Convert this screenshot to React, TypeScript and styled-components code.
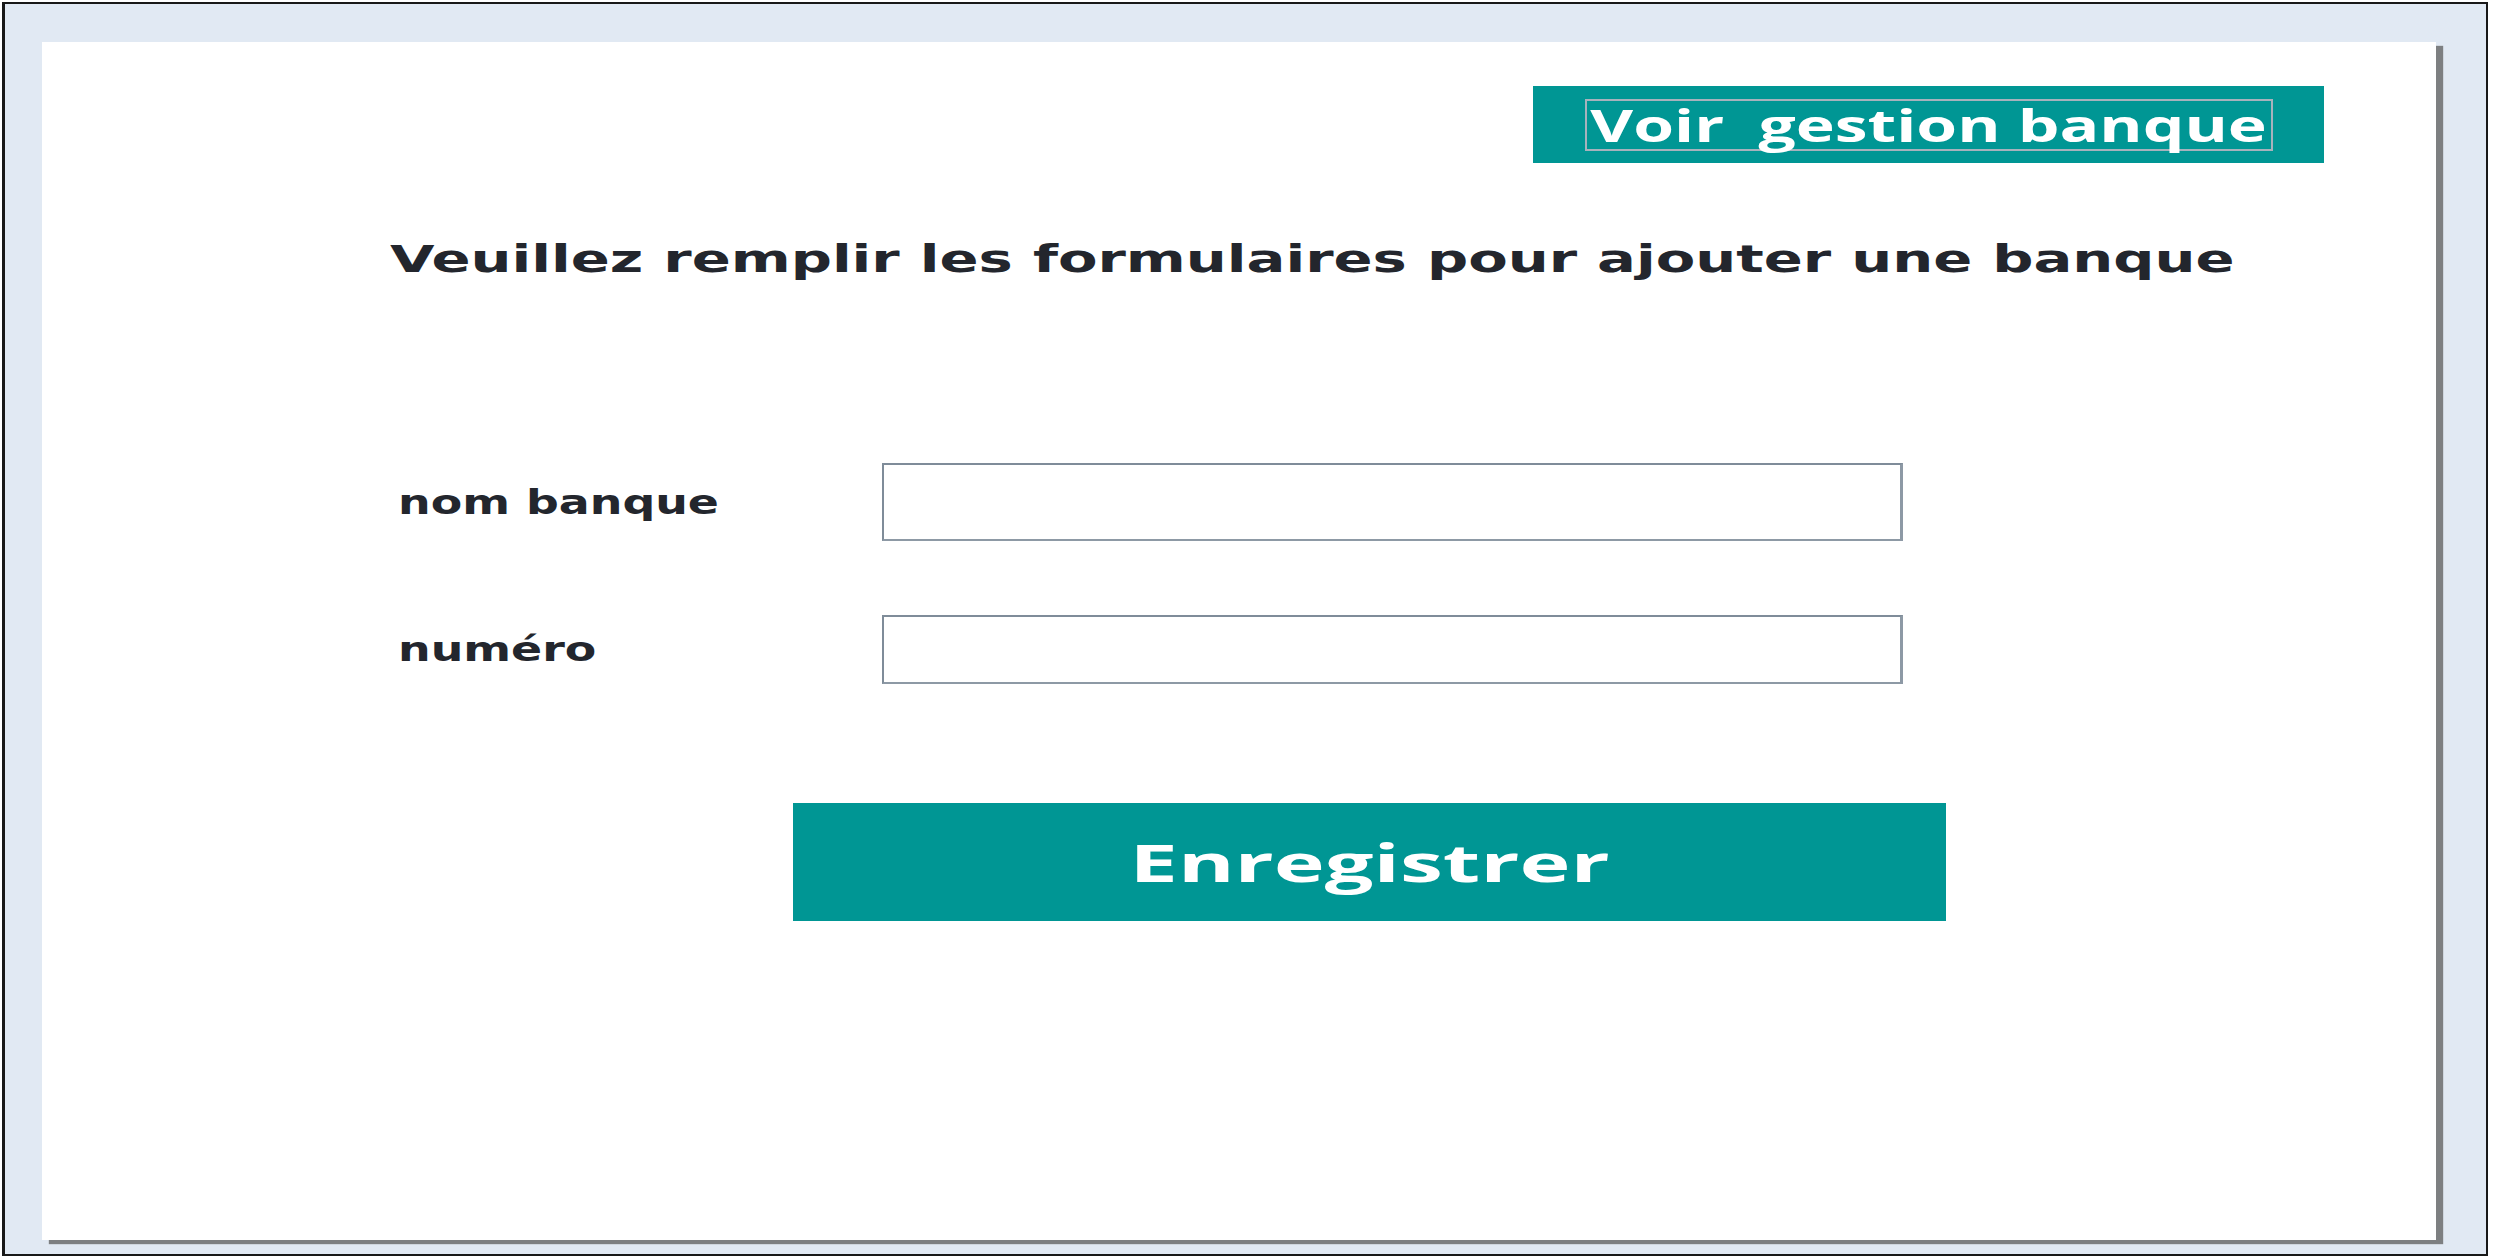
import styled, { createGlobalStyle } from 'styled-components';

const GlobalStyle = createGlobalStyle`
  html, body {
    margin: 0;
    padding: 0;
    background: #ffffff;
  }
  body {
    font-family: 'DejaVu Sans', Verdana, sans-serif;
  }
`;

const TEAL = '#009694';

const Screen = styled.div`
  width: 2493px;
  height: 1260px;
  box-sizing: border-box;
  padding: 2px 5px 4px 2px;
`;

const Frame = styled.div`
  width: 100%;
  height: 100%;
  box-sizing: border-box;
  border: 2px solid #181818;
  border-left-width: 3px;
  background: #e1e9f3;
  padding: 38px 0 0 37px;
`;

const Panel = styled.div`
  width: 2394px;
  height: 1198px;
  box-sizing: border-box;
  background: #ffffff;
  box-shadow: 7px 4px 1px rgba(100, 100, 100, 0.8);
  padding: 44px 112px 0 0;
  display: flex;
  flex-direction: column;
`;

const TopBar = styled.div`
  display: flex;
  justify-content: flex-end;
`;

const TealButton = styled.button<{ $w: number; $h: number }>`
  width: ${(p) => p.$w}px;
  height: ${(p) => p.$h}px;
  background: ${TEAL};
  border: none;
  padding: 0;
  display: flex;
  align-items: center;
  justify-content: center;
  color: #ffffff;
  font-family: 'Open Sans', 'Noto Sans', sans-serif;
  font-weight: 700;
  cursor: pointer;
`;

const FocusBox = styled.span`
  width: 688px;
  height: 52px;
  box-sizing: border-box;
  border: 2px solid #a7b2bc;
  display: flex;
  align-items: center;
  justify-content: center;
`;

const Stretch = styled.span<{ $sx: number; $origin?: string; $size: number }>`
  display: inline-block;
  white-space: pre;
  font-size: ${(p) => p.$size}px;
  line-height: 1;
  transform: scaleX(${(p) => p.$sx});
  transform-origin: ${(p) => p.$origin || 'left'} center;
`;

const Heading = styled.h1`
  margin: 76px 0 0 348px;
  font-size: 37px;
  line-height: 42px;
  font-weight: 700;
  color: #23262d;
  white-space: nowrap;
`;

const Form = styled.div`
  margin: 182px 0 0 356px;
  display: grid;
  grid-template-columns: 484px 1021px;
  row-gap: 74px;
  align-items: center;
`;

const Label = styled.label`
  font-weight: 700;
  color: #23262d;
  white-space: nowrap;
`;

const Field = styled.input<{ $h: number }>`
  width: 1021px;
  height: ${(p) => p.$h}px;
  box-sizing: border-box;
  border: 2px solid #8d99a5;
  border-top-color: #7f8c99;
  border-left-color: #7f8c99;
  border-right-width: 3px;
  background: #ffffff;
  outline: none;
  padding: 0 10px;
  font-size: 28px;
`;

const SaveRow = styled.div`
  margin: 119px 0 0 751px;
`;

export default function App() {
  return (
    <>
      <GlobalStyle />
      <Screen>
        <Frame>
          <Panel>
            <TopBar>
              <TealButton $w={791} $h={77}>
                <FocusBox>
                  <Stretch $size={44} $sx={1.5} $origin="center">
                    Voir  gestion banque
                  </Stretch>
                </FocusBox>
              </TealButton>
            </TopBar>
            <Heading>
              <Stretch $size={37} $sx={1.556}>
                Veuillez remplir les formulaires pour ajouter une banque
              </Stretch>
            </Heading>
            <Form>
              <Label htmlFor="nom">
                <Stretch $size={33} $sx={1.39}>nom banque</Stretch>
              </Label>
              <Field id="nom" $h={78} />
              <Label htmlFor="numero">
                <Stretch $size={33} $sx={1.39}>numéro</Stretch>
              </Label>
              <Field id="numero" $h={69} />
            </Form>
            <SaveRow>
              <TealButton $w={1153} $h={118}>
                <Stretch $size={52} $sx={1.66} $origin="center">
                  Enregistrer
                </Stretch>
              </TealButton>
            </SaveRow>
          </Panel>
        </Frame>
      </Screen>
    </>
  );
}
